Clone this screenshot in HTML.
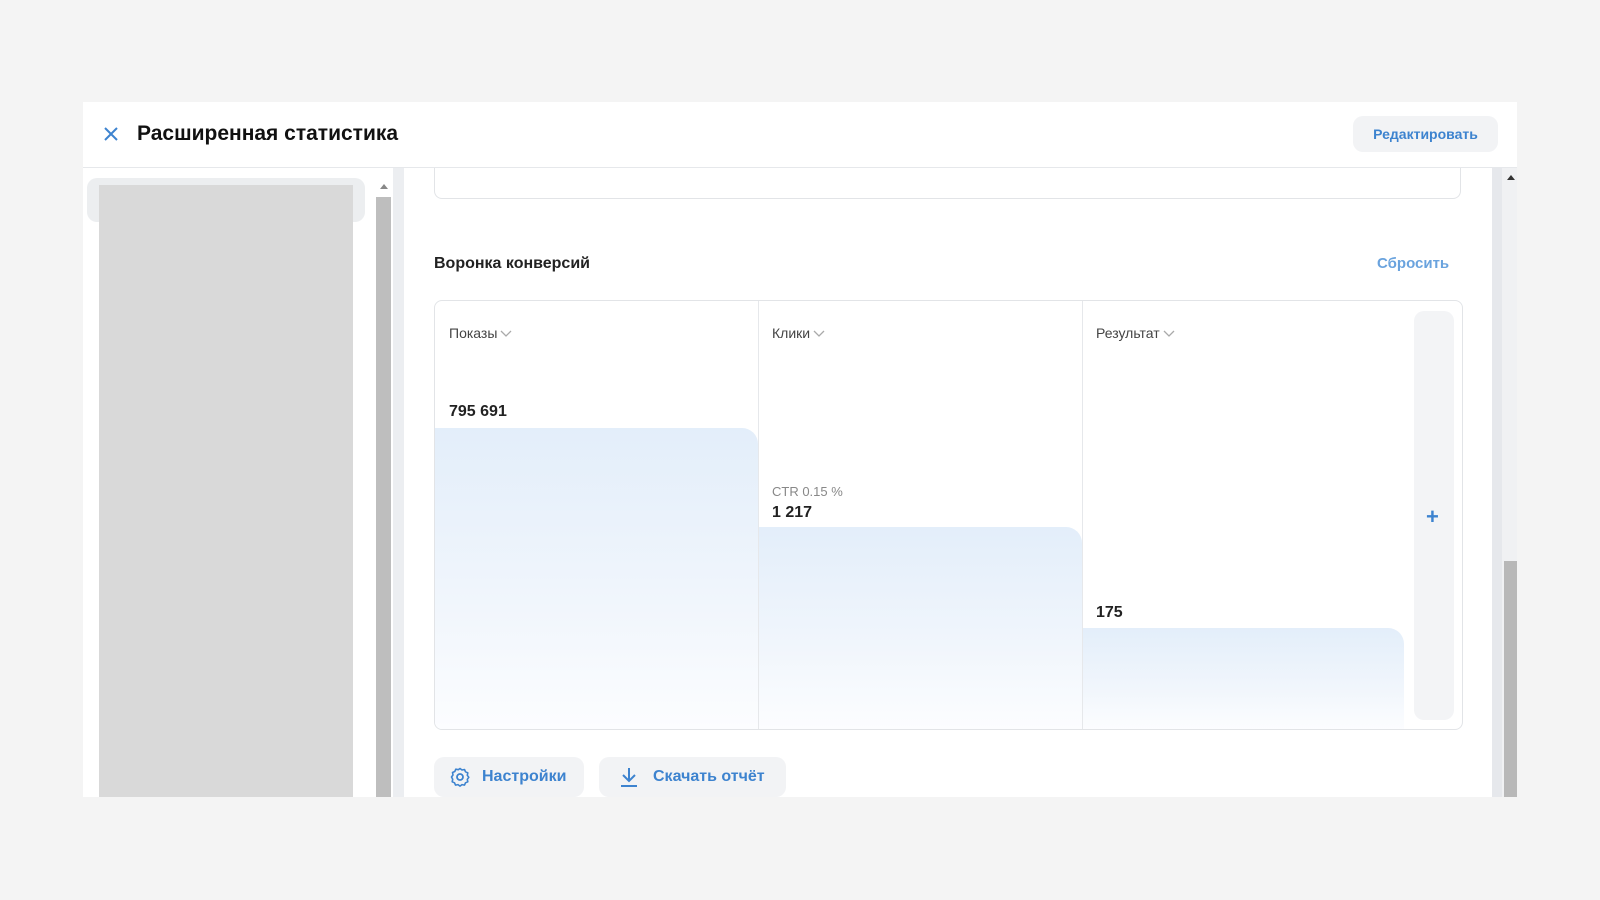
<!DOCTYPE html><html><head><meta charset="utf-8"><style>
*{box-sizing:border-box;margin:0;padding:0}
body{width:1600px;height:900px;background:#f4f4f4;position:relative;overflow:hidden;font-family:"Liberation Sans",sans-serif;color:#222}
.a{position:absolute}
.bar{position:absolute;background:linear-gradient(#e3eefa,#f1f6fc 60%,#fcfdff);border-radius:0 16px 0 0}
.lab{position:absolute;font-size:14px;color:#444}
.lab svg{vertical-align:middle;margin-left:3px}
.val{position:absolute;font-size:16px;font-weight:bold;color:#222}
.btn{position:absolute;background:#f2f3f5;border-radius:10px;color:#3d83cf;font-size:16px;font-weight:bold;display:flex;align-items:center}
</style></head><body>
<div class="a" style="left:83px;top:102px;width:1434px;height:695px;background:#fff"></div>
<div class="a" style="left:434px;top:168px;width:1027px;height:31px;border:1px solid #e2e4e7;border-top:none;border-radius:0 0 8px 8px"></div>
<div class="a" style="left:83px;top:167px;width:1434px;height:1px;background:#e6e8eb"></div>
<svg class="a" style="left:103px;top:126px" width="16" height="16" viewBox="0 0 16 16"><path d="M2 2L14 14M14 2L2 14" stroke="#3d83cf" stroke-width="2"/></svg>
<div class="a" style="left:137px;top:122px;font-size:21px;font-weight:bold;color:#111">Расширенная статистика</div>
<div class="btn" style="left:1353px;top:116px;width:145px;height:36px;justify-content:center;font-size:14px">Редактировать</div>
<div class="a" style="left:87px;top:178px;width:278px;height:44px;background:#eceef0;border-radius:10px"></div>
<div class="a" style="left:99px;top:185px;width:254px;height:612px;background:#d9d9d9"></div>
<div class="a" style="left:376px;top:197px;width:15px;height:600px;background:#bebebe"></div>
<div class="a" style="left:380px;top:184px;width:0;height:0;border-left:4px solid transparent;border-right:4px solid transparent;border-bottom:5px solid #888"></div>
<div class="a" style="left:393px;top:168px;width:11px;height:629px;background:#eceef1"></div>
<div class="a" style="left:1492px;top:168px;width:25px;height:629px;background:#f0f1f3"></div>
<div class="a" style="left:1492px;top:168px;width:10px;height:629px;background:#e6e8ec"></div>
<div class="a" style="left:1504px;top:561px;width:13px;height:236px;background:#b8b8b8"></div>
<div class="a" style="left:1507px;top:175px;width:0;height:0;border-left:4px solid transparent;border-right:4px solid transparent;border-bottom:5px solid #333"></div>
<div class="a" style="left:434px;top:255px;font-size:16px;font-weight:bold;color:#222">Воронка конверсий</div>
<div class="a" style="left:1377px;top:255px;font-size:15px;font-weight:bold;color:#6aa3de">Сбросить</div>
<div class="a" style="left:434px;top:300px;width:1029px;height:430px;border:1px solid #e2e4e7;border-radius:8px;overflow:hidden">
 <div class="bar" style="left:0;top:127px;width:323px;height:302px"></div>
 <div class="bar" style="left:323px;top:226px;width:324px;height:203px"></div>
 <div class="bar" style="left:647px;top:327px;width:322px;height:102px"></div>
 <div class="a" style="left:323px;top:0;width:1px;height:430px;background:#e6e8eb"></div>
 <div class="a" style="left:647px;top:0;width:1px;height:430px;background:#e6e8eb"></div>
 <div class="a" style="left:979px;top:10px;width:40px;height:409px;background:#f3f4f6;border-radius:10px"></div>
 <div class="a" style="left:991px;top:203px;font-size:22px;color:#3d83cf;font-weight:bold">+</div>
</div>
<div class="lab" style="left:449px;top:325px">Показы<svg width="12" height="8"><path d="M1 1L6 6L11 1" stroke="#aaa" fill="none" stroke-width="1.3"/></svg></div>
<div class="lab" style="left:772px;top:325px">Клики<svg width="12" height="8"><path d="M1 1L6 6L11 1" stroke="#aaa" fill="none" stroke-width="1.3"/></svg></div>
<div class="lab" style="left:1096px;top:325px">Результат<svg width="12" height="8"><path d="M1 1L6 6L11 1" stroke="#aaa" fill="none" stroke-width="1.3"/></svg></div>
<div class="val" style="left:449px;top:403px">795 691</div>
<div class="a" style="left:772px;top:484px;font-size:13px;color:#888">CTR 0.15 %</div>
<div class="val" style="left:772px;top:504px">1 217</div>
<div class="val" style="left:1096px;top:604px">175</div>
<div class="btn" style="left:434px;top:757px;width:150px;height:40px;padding-left:16px"><svg width="20" height="20" viewBox="0 0 20 20" style="margin-right:12px"><circle cx="10" cy="10" r="3" fill="none" stroke="#3d83cf" stroke-width="1.8"/><path d="M10 1.5l2 1.5 2.5-.5 1 2.3 2.3 1-.5 2.5 1.5 2-1.5 2 .5 2.5-2.3 1-1 2.3-2.5-.5-2 1.5-2-1.5-2.5.5-1-2.3-2.3-1 .5-2.5L1.5 10l1.5-2-.5-2.5 2.3-1 1-2.3 2.5.5z" fill="none" stroke="#3d83cf" stroke-width="1.6" stroke-linejoin="round"/></svg>Настройки</div>
<div class="btn" style="left:599px;top:757px;width:187px;height:40px;padding-left:20px"><svg width="20" height="22" viewBox="0 0 20 22" style="margin-right:14px"><path d="M10 2v13M4 9l6 6 6-6M2 20h16" fill="none" stroke="#3d83cf" stroke-width="2"/></svg>Скачать отчёт</div>
</body></html>
